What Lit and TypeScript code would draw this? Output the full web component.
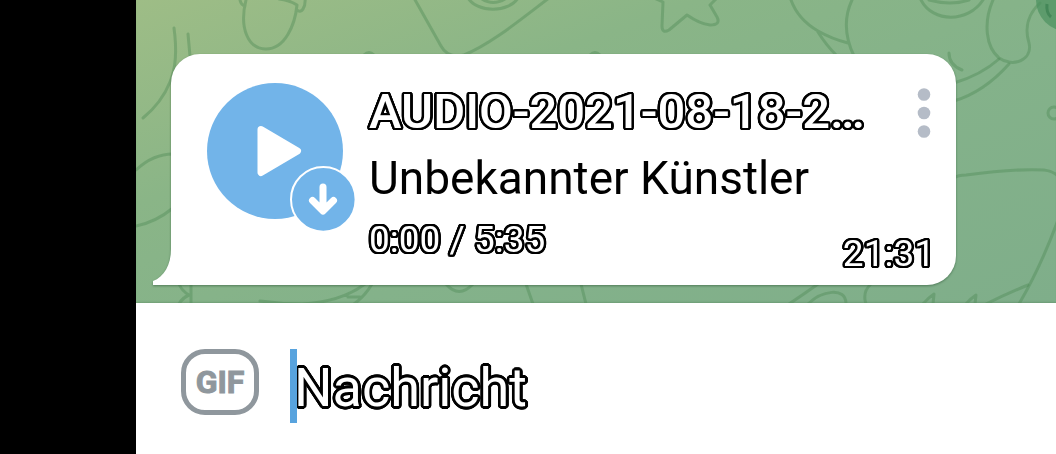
import { LitElement, html, css, svg, unsafeCSS } from "lit";
import { customElement, property } from "lit/decorators.js";

/** A text-shadow list that surrounds the glyphs with a round-cornered outline. */
const ring = (radius: number, color: string) =>
  unsafeCSS(
    Array.from({ length: 24 }, (_, i) => {
      const a = (i * Math.PI) / 12;
      return `${(radius * Math.cos(a)).toFixed(2)}px ${(radius * Math.sin(a)).toFixed(2)}px 0 ${color}`;
    }).join(", ")
  );

const doodles = svg`
  <g fill="none" stroke="#4f8a55" stroke-opacity="0.42" stroke-width="3" stroke-linecap="round" stroke-linejoin="round">
    <path d="M38 28C41 50 40 68 34 82C28 97 18 109 7 118M52 34L54 56" />
    <path d="M110 0C103 28 112 49 130 49C149 49 159 25 161 5Q153 0 143 -1M104 0Q105 5 109 6M169 -2C170 8 165 14 161 10" />
    <path d="M278 -2L305 46Q312 59 328 55C355 44 384 20 413 -2" />
    <path d="M332 -2A27 18 0 0 0 382 -2M346 -1Q357 6 369 -1" />
    <path d="M228 55Q233 50 238 55M454 55Q459 50 464 55" />
    <path d="M518 -2L527 2L526 26Q526 34 533 30L551 15Q564 24 574 25Q585 25 581 17L574 5L580 -1" />
    <path d="M655 0C660 14 670 24 682 31Q696 39 712 43M682 32Q690 45 701 56M716 0C708 17 708 35 718 56" />
    <path d="M785 0C797 23 832 23 847 0M793 0Q815 6 833 0" />
    <path d="M857 0C847 23 850 47 863 58C877 68 897 60 893 43C888 27 893 13 904 3" />
    <path d="M818 83Q845 75 863 59M818 101Q848 92 873 64M813 53Q813 65 826 70" />
    <circle cx="918" cy="113" r="6" />
    <path d="M818 178Q822 175 830 175C860 171 890 169 908 170Q917 171 922 176M922 220C911 250 897 280 883 304" />
    <path d="M892 285Q870 294 850 304M653 304Q668 294 682 284M672 304C685 291 710 286 710 304M735 284Q726 292 730 304M787 304Q792 298 798 294L797 304M830 304Q834 299 840 295L839 304" />
    <path d="M0 170Q17 154 37 154M0 226Q20 222 37 208" />
    <path d="M55 284V304M43 284Q46 291 53 295Q46 298 43 304M124 301Q145 304 166 304Q205 302 229 284M236 284Q229 296 218 304M212 297H224" />
    <path d="M310 284Q323 299 337 284M390 284L397 304M445 284L450 304" />
  </g>
  <circle cx="931" cy="0" r="31" fill="#4c9160" fill-opacity="0.7" />
  <path d="M911 4Q910 13 915 17" fill="none" stroke="#347a4b" stroke-opacity="0.6" stroke-width="3" />
`;

@customElement("audio-message")
class AudioMessage extends LitElement {
  @property() name = "";
  @property() artist = "";
  @property() progress = "";
  @property() time = "";

  static styles = css`
    :host {
      display: block;
      position: relative;
      filter: drop-shadow(0 1px 1px rgba(40, 80, 50, 0.55));
    }
    .bubble {
      display: flex;
      gap: 26px;
      padding: 29px 21px 9px 36px;
      background: #fff;
      border-radius: 29px 29px 29px 0;
    }
    .tail {
      position: absolute;
      left: -18px;
      bottom: 0;
      width: 19px;
      height: 36px;
      fill: #fff;
    }
    button {
      padding: 0;
      border: 0;
      background: none;
      cursor: pointer;
    }
    .play {
      flex: none;
      align-self: flex-start;
      width: 136px;
      height: 136px;
    }
    .play svg {
      display: block;
      overflow: visible;
    }
    .body {
      flex: 1;
      min-width: 0;
    }
    .head,
    .meta {
      display: flex;
      justify-content: space-between;
    }
    .outlined {
      color: #fff;
      text-shadow: ${ring(2.4, "#000")};
    }
    .name {
      font-size: 49px;
      line-height: 58px;
      font-weight: 500;
      white-space: nowrap;
    }
    .menu {
      width: 22px;
      height: 60px;
    }
    .menu svg {
      display: block;
    }
    .artist {
      font-size: 46px;
      line-height: 74px;
      padding-bottom: 2px;
      color: #000;
      white-space: nowrap;
    }
    .head {
      height: 58px;
    }
    .progress,
    .time {
      font-size: 37px;
      line-height: 45px;
    }
    .time {
      padding-top: 14px;
    }
  `;

  render() {
    return html`
      <svg class="tail" viewBox="0 0 19 36" aria-hidden="true">
        <path d="M19 0H18C18 16 11 28 0 32V36H19Z" />
      </svg>
      <div class="bubble">
        <button class="play" aria-label="Abspielen">
          <svg width="136" height="136" viewBox="0 0 136 136">
            <circle cx="68" cy="68" r="68" fill="#72b4e9" />
            <path d="M54 46.500L90.500 68L54 89.500Z" fill="#fff" stroke="#fff" stroke-width="7" stroke-linejoin="round" />
            <circle cx="116.300" cy="116.400" r="32.300" fill="#72b4e9" stroke="#fff" stroke-width="2" />
            <path d="M116 104V125M105.500 117.500L116 128L126.500 117.500" fill="none" stroke="#fff" stroke-width="7" stroke-linecap="round" stroke-linejoin="round" />
          </svg>
        </button>
        <div class="body">
          <div class="head">
            <span class="name outlined">${this.name}</span>
            <button class="menu" aria-label="Mehr">
              <svg width="22" height="60" viewBox="0 0 22 60" fill="#b5bcc7">
                <circle cx="11" cy="11.500" r="6.300" />
                <circle cx="11" cy="30" r="6.300" />
                <circle cx="11" cy="48.500" r="6.300" />
              </svg>
            </button>
          </div>
          <div class="artist">${this.artist}</div>
          <div class="meta">
            <span class="progress outlined">${this.progress}</span>
            <time class="time outlined">${this.time}</time>
          </div>
        </div>
      </div>
    `;
  }
}

@customElement("message-composer")
class MessageComposer extends LitElement {
  static styles = css`
    :host {
      display: flex;
      align-items: flex-start;
      gap: 31px;
      padding: 46px 24px 31px 45px;
      background: #fff;
    }
    .gif {
      flex: none;
      box-sizing: border-box;
      width: 78px;
      height: 66px;
      padding: 0;
      border: 5px solid #8f979d;
      border-radius: 24px;
      background: none;
      color: #8f979d;
      font: 700 32px/56px Roboto, sans-serif;
      -webkit-text-stroke: 1px #8f979d;
      cursor: pointer;
    }
    .field {
      position: relative;
      flex: 1;
      min-width: 0;
    }
    .field::before {
      content: "";
      position: absolute;
      z-index: 1;
      left: 0;
      top: 0;
      width: 7px;
      height: 100%;
      background: #58a3de;
    }
    input {
      display: block;
      box-sizing: border-box;
      width: 100%;
      height: 74px;
      padding: 2px 0 0 4px;
      border: 0;
      outline: 0;
      background: none;
      font: 400 54px/72px Roboto, sans-serif;
    }
    input::placeholder {
      color: #fff;
      opacity: 1;
      text-shadow: ${ring(2.8, "#000")};
    }
  `;

  render() {
    return html`
      <button class="gif">GIF</button>
      <div class="field">
        <input type="text" placeholder="Nachricht" aria-label="Nachricht" />
      </div>
    `;
  }
}

@customElement("app-root")
class AppRoot extends LitElement {
  static styles = css`
    :host {
      display: flex;
      min-height: 100vh;
      padding-left: 136px;
      box-sizing: border-box;
      background: #000;
      font-family: Roboto, sans-serif;
    }
    .screen {
      flex: 1;
      min-width: 0;
      display: flex;
      flex-direction: column;
      background: #fff;
    }
    .chat {
      position: relative;
      overflow: hidden;
      padding: 54px 100px 18px 35px;
      background: linear-gradient(160deg, #9ebd86 0%, #8ab587 32%, #84b28a 60%, #7fae8a 100%);
      box-shadow: inset 0 -2px 2px -1px rgba(60, 110, 70, 0.3);
    }
    .wallpaper {
      position: absolute;
      inset: 0;
      width: 100%;
      height: 100%;
    }
  `;

  render() {
    return html`
      <main class="screen">
        <section class="chat">
          <svg class="wallpaper" viewBox="0 0 920 303" preserveAspectRatio="xMinYMin slice" aria-hidden="true">${doodles}</svg>
          <audio-message
            name="AUDIO-2021-08-18-2…"
            artist="Unbekannter Künstler"
            progress="0:00 / 5:35"
            time="21:31"
          ></audio-message>
        </section>
        <message-composer></message-composer>
      </main>
    `;
  }
}
